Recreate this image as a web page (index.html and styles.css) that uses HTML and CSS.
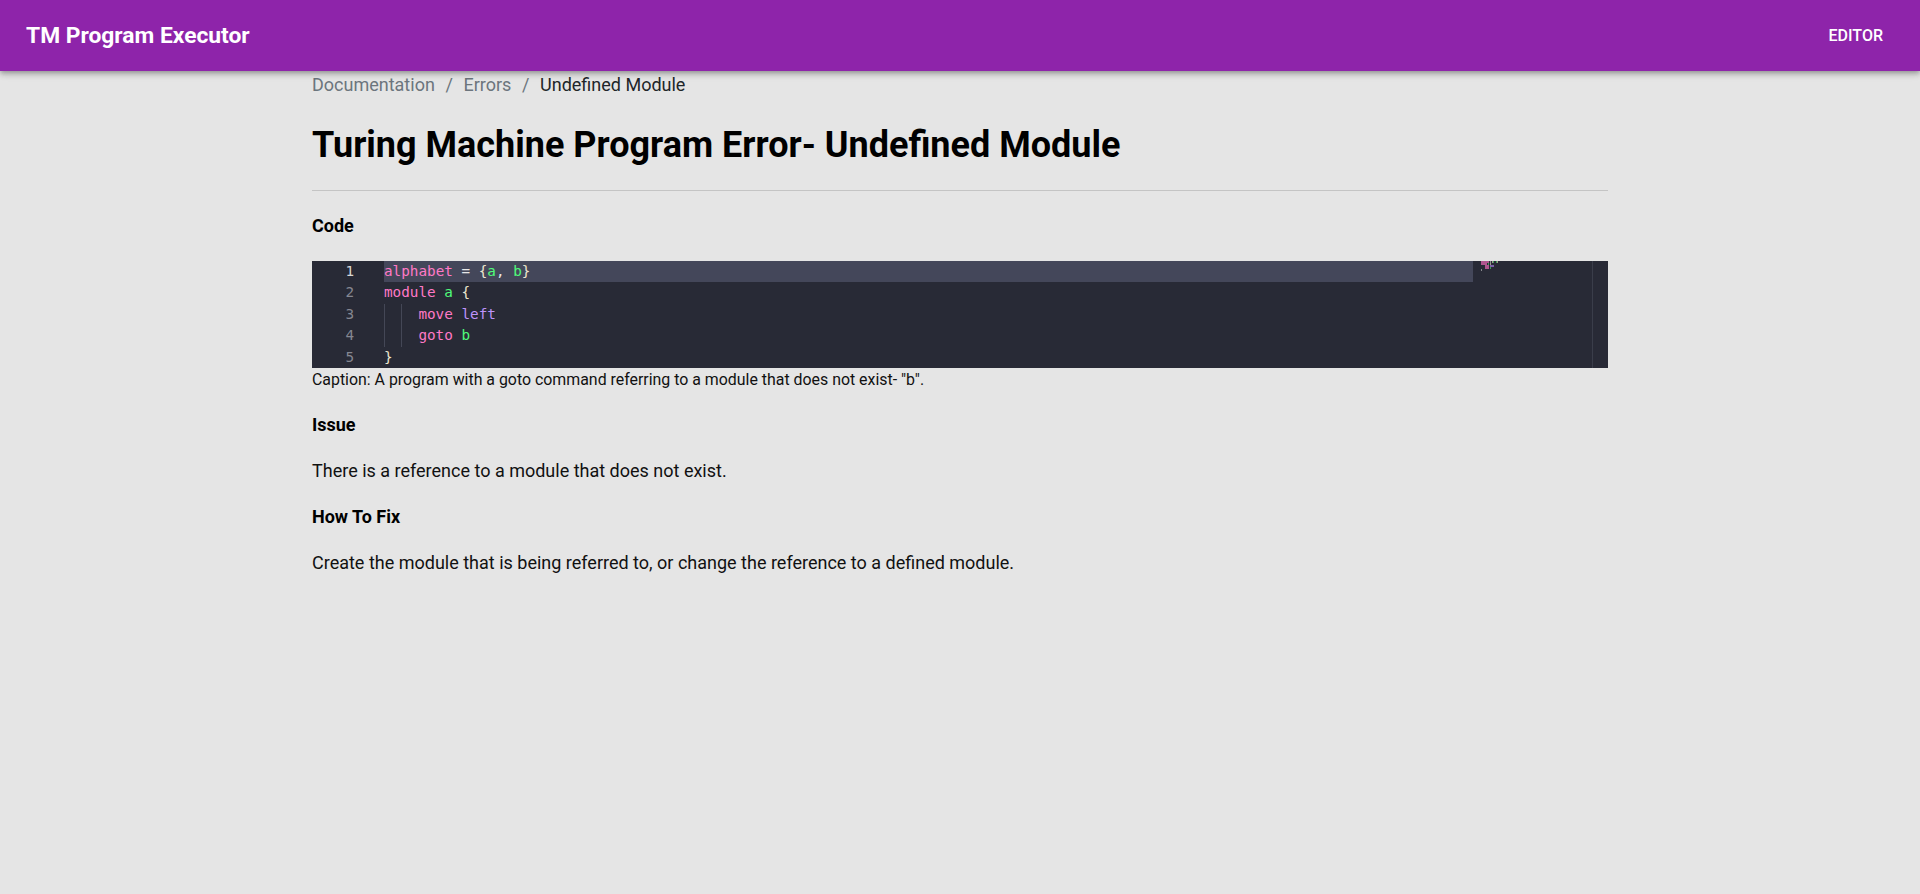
FILE: index.html
```html
<!DOCTYPE html>
<html lang="en">
<head>
<meta charset="utf-8">
<title>TM Program Executor - Undefined Module</title>
<link rel="stylesheet" href="styles.css">
</head>
<body>
<header class="appbar">
  <div class="brand">TM Program Executor</div>
  <button class="nav-btn" type="button">Editor</button>
</header>
<main class="container">
  <nav class="breadcrumb">
    <a class="crumb" href="#">Documentation</a>
    <span class="sep">/</span>
    <a class="crumb" href="#">Errors</a>
    <span class="sep">/</span>
    <span class="crumb current">Undefined Module</span>
  </nav>
  <h1 class="page-title">Turing Machine Program Error- Undefined Module</h1>
  <hr class="divider">

  <h6 class="section-title code-title">Code</h6>
  <figure class="code-figure">
    <div class="editor">
      <div class="gutter">
        <div class="ln active">1</div>
        <div class="ln">2</div>
        <div class="ln">3</div>
        <div class="ln">4</div>
        <div class="ln">5</div>
      </div>
      <div class="code">
        <div class="line active"><span class="kw">alphabet</span><span class="op"> = </span><span class="br">{</span><span class="id">a</span><span class="op">, </span><span class="id">b</span><span class="br">}</span></div>
        <div class="line"><span class="kw">module</span><span class="op"> </span><span class="id">a</span><span class="op"> </span><span class="br">{</span></div>
        <div class="line"><span class="indent"></span><span class="indent"></span><span class="kw">move</span><span class="op"> </span><span class="dir">left</span></div>
        <div class="line"><span class="indent"></span><span class="indent"></span><span class="kw">goto</span><span class="op"> </span><span class="id">b</span></div>
        <div class="line"><span class="br">}</span></div>
      </div>
      <div class="minimap">
        <svg width="24" height="12" viewBox="0 0 24 12" aria-hidden="true">
          <rect x="0" y="0" width="8" height="2" fill="#b0558f"/>
          <rect x="9" y="0" width="1" height="2" fill="#8a8a90"/>
          <rect x="11" y="0" width="1" height="2" fill="#9c9c8c"/>
          <rect x="12" y="0" width="1" height="2" fill="#3f9a58"/>
          <rect x="15" y="0" width="1" height="2" fill="#3f9a58"/>
          <rect x="16" y="0" width="1" height="2" fill="#9c9c8c"/>
          <rect x="0" y="2" width="6" height="2" fill="#b0558f"/>
          <rect x="7" y="2" width="1" height="2" fill="#3f9a58"/>
          <rect x="9" y="2" width="1" height="2" fill="#9c9c8c"/>
          <rect x="4" y="4" width="4" height="2" fill="#b0558f"/>
          <rect x="9" y="4" width="4" height="2" fill="#7a63a8"/>
          <rect x="4" y="6" width="4" height="2" fill="#b0558f"/>
          <rect x="9" y="6" width="1" height="2" fill="#3f9a58"/>
          <rect x="0" y="8" width="1" height="2" fill="#8a8a90"/>
        </svg>
      </div>
      <div class="scrollbar"></div>
    </div>
    <figcaption class="caption">Caption: A program with a goto command referring to a module that does not exist- "b".</figcaption>
  </figure>

  <h6 class="section-title issue-title">Issue</h6>
  <p class="body-text">There is a reference to a module that does not exist.</p>

  <h6 class="section-title">How To Fix</h6>
  <p class="body-text">Create the module that is being referred to, or change the reference to a defined module.</p>
</main>
</body>
</html>
```

FILE: styles.css
```css
* {
  box-sizing: border-box;
}

html, body {
  margin: 0;
  padding: 0;
}

body {
  background: #e5e5e5;
  font-family: Roboto, "Liberation Sans", Arial, sans-serif;
  color: #212529;
  font-size: 18px;
  line-height: 27px;
}

/* ---------- App bar ---------- */
.appbar {
  position: relative;
  z-index: 2;
  height: 71px;
  background: #8e24aa;
  color: #fff;
  display: flex;
  align-items: center;
  justify-content: space-between;
  padding: 0 24px 0 26px;
  box-shadow: 0 2px 4px -1px rgba(0,0,0,0.2), 0 4px 5px 0 rgba(0,0,0,0.14), 0 1px 10px 0 rgba(0,0,0,0.12);
}

.brand {
  font-size: 22.8px;
  font-weight: 700;
  letter-spacing: 0;
  line-height: 32px;
}

.nav-btn {
  background: transparent;
  border: 0;
  color: #fff;
  font-family: inherit;
  font-size: 16px;
  font-weight: 500;
  text-transform: uppercase;
  padding: 6px 13px;
  line-height: 24px;
  cursor: pointer;
}

/* ---------- Content ---------- */
.container {
  width: 1296px;
  margin: 0 auto;
}

.breadcrumb {
  display: flex;
  align-items: baseline;
  font-size: 18px;
  line-height: 27px;
}

.crumb {
  color: #6c757d;
  text-decoration: none;
}

.crumb.current {
  color: #212529;
}

.sep {
  color: #6c757d;
  padding: 0 10.6px;
}

.page-title {
  margin: 26px 0 0;
  font-size: 36px;
  line-height: 43px;
  font-weight: 700;
  color: #000;
}

.divider {
  margin: 23px 0 0;
  border: 0;
  height: 1px;
  background: #c4c4c4;
}

.section-title {
  margin: 19px 0 0;
  font-size: 18px;
  line-height: 27px;
  font-weight: 700;
  color: #000;
}

.code-title {
  margin-top: 21px;
}

.issue-title {
  margin-top: 20px;
}

.body-text {
  margin: 19px 0 0;
  font-size: 18px;
  line-height: 27px;
  color: #111;
}

/* ---------- Code editor ---------- */
.code-figure {
  margin: 22px 0 0;
}

.editor {
  display: flex;
  height: 107px;
  background: #282a36;
  font-family: "DejaVu Sans Mono", "Liberation Mono", monospace;
  font-size: 14.3px;
  line-height: 21.4px;
  overflow: hidden;
}

.gutter {
  width: 72px;
  flex: none;
  padding-right: 30px;
  text-align: right;
  color: #858791;
}

.ln {
  height: 21.4px;
}

.ln.active {
  color: #d6d6d6;
}

.code {
  width: 1089px;
  flex: none;
  color: #f8f8f2;
}

.line {
  height: 21.4px;
  display: flex;
  white-space: pre;
}

.line.active {
  background: #44475a;
}

.indent {
  display: block;
  width: 2ch;
  height: 21.4px;
  box-shadow: inset 1px 0 0 #444756;
}

.kw { color: #ff79c6; }
.id { color: #50fa7b; }
.dir { color: #bd93f9; }
.op { color: #e6e6e6; }
.br { color: #ece6cf; }

.minimap {
  flex: 1;
  padding-left: 8px;
}

.minimap svg {
  display: block;
}

.scrollbar {
  width: 16px;
  flex: none;
  border-left: 1px solid #3a3d4a;
  background: #282a36;
}

.caption {
  font-size: 15.9px;
  line-height: 23px;
  color: #111;
}
```
